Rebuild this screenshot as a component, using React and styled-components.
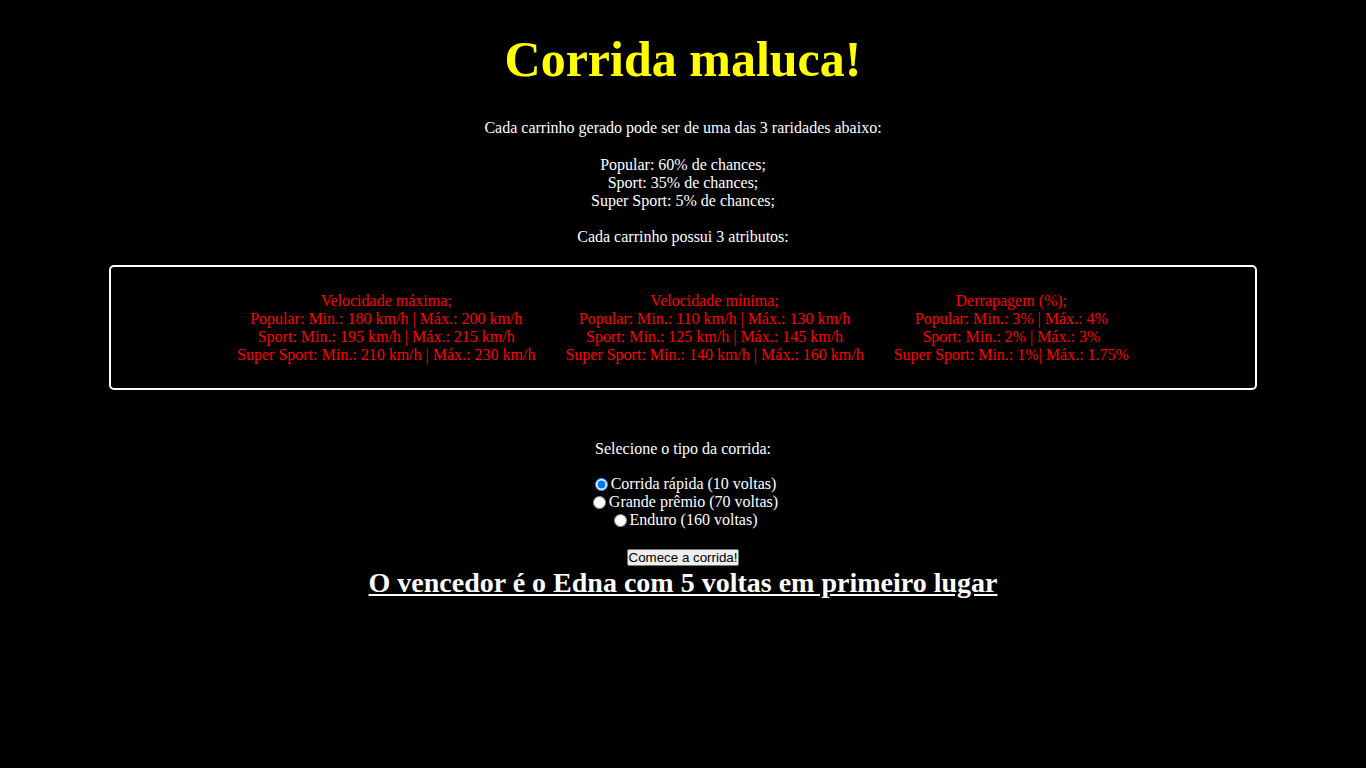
import React, { useState } from 'react';
import styled, { createGlobalStyle } from 'styled-components';

const GlobalStyle = createGlobalStyle`
  body {
    margin: 8px;
    background-color: #000;
    color: #fff;
    font-family: "Liberation Serif", "Times New Roman", serif;
    font-size: 16px;
  }
`;

const attributes = [
  {
    title: 'Velocidade máxima;',
    rows: [
      'Popular: Min.: 180 km/h | Máx.: 200 km/h',
      'Sport: Min.: 195 km/h | Máx.: 215 km/h',
      'Super Sport: Min.: 210 km/h | Máx.: 230 km/h',
    ],
  },
  {
    title: 'Velocidade mínima;',
    rows: [
      'Popular: Min.: 110 km/h | Máx.: 130 km/h',
      'Sport: Min.: 125 km/h | Máx.: 145 km/h',
      'Super Sport: Min.: 140 km/h | Máx.: 160 km/h',
    ],
  },
  {
    title: 'Derrapagem (%);',
    rows: [
      'Popular: Min.: 3% | Máx.: 4%',
      'Sport: Min.: 2% | Máx.: 3%',
      'Super Sport: Min.: 1%| Máx.: 1.75%',
    ],
  },
];

const races = [
  { id: 'rapida', label: 'Corrida rápida (10 voltas)' },
  { id: 'gp', label: 'Grande prêmio (70 voltas)' },
  { id: 'enduro', label: 'Enduro (160 voltas)' },
];

const App = () => {
  const [race, setRace] = useState('rapida');

  return (
    <Page>
      <GlobalStyle />
      <Title>Corrida maluca!</Title>
      <Text>Cada carrinho gerado pode ser de uma das 3 raridades abaixo:</Text>
      <Text>
        Popular: 60% de chances;<br />
        Sport: 35% de chances;<br />
        Super Sport: 5% de chances;
      </Text>
      <Text>Cada carrinho possui 3 atributos:</Text>

      <AttributesBox>
        <Columns>
          {attributes.map((a) => (
            <Column key={a.title}>
              {a.title}
              {a.rows.map((r) => (
                <div key={r}>{r}</div>
              ))}
            </Column>
          ))}
        </Columns>
      </AttributesBox>

      <Prompt>Selecione o tipo da corrida:</Prompt>
      <RaceList>
        {races.map((r) => (
          <RaceOption key={r.id}>
            <input
              type="radio"
              name="race"
              checked={race === r.id}
              onChange={() => setRace(r.id)}
            />
            {r.label}
          </RaceOption>
        ))}
      </RaceList>
      <Actions>
        <StartButton>Comece a corrida!</StartButton>
      </Actions>
      <Winner>O vencedor é o Edna com 5 voltas em primeiro lugar</Winner>
    </Page>
  );
};

const Page = styled.div`
  text-align: center;
`;

const Title = styled.h1`
  color: #ffff00;
  font-size: 50px;
  font-weight: bold;
  margin: 22px 0 31px;
`;

const Text = styled.p`
  margin: 18.5px 0;
  line-height: 18px;
`;

const AttributesBox = styled.div`
  width: 85%;
  margin: 0 auto;
  padding: 9px 8px 8px;
  box-sizing: border-box;
  border: 2px solid #fff;
  border-radius: 5px;
`;

const Columns = styled.div`
  display: flex;
  justify-content: center;
  gap: 30px;
  margin: 16px 0;
`;

const Column = styled.div`
  color: #ff0000;
  line-height: 18px;
`;

const Prompt = styled.p`
  margin: 50px 0 17px;
  line-height: 18px;
`;

const RaceList = styled.div`
  line-height: 18px;
`;

const RaceOption = styled.label`
  display: block;

  input {
    width: 13px;
    height: 13px;
    margin: 0 3px 0 5px;
    vertical-align: -2px;
  }
`;

const Actions = styled.div`
  margin-top: 19px;
  line-height: 17px;
`;

const StartButton = styled.button`
  font-family: Arial, "Liberation Sans", sans-serif;
  font-size: 13.33px;
  line-height: 15px;
  padding: 0 1px;
  color: #000;
  background: #efefef;
  border: 1px solid #767676;
  border-radius: 2px;
`;

const Winner = styled.h1`
  font-size: 28px;
  font-weight: bold;
  text-decoration: underline;
  margin: 1px 0 0;
`;

export default App;
